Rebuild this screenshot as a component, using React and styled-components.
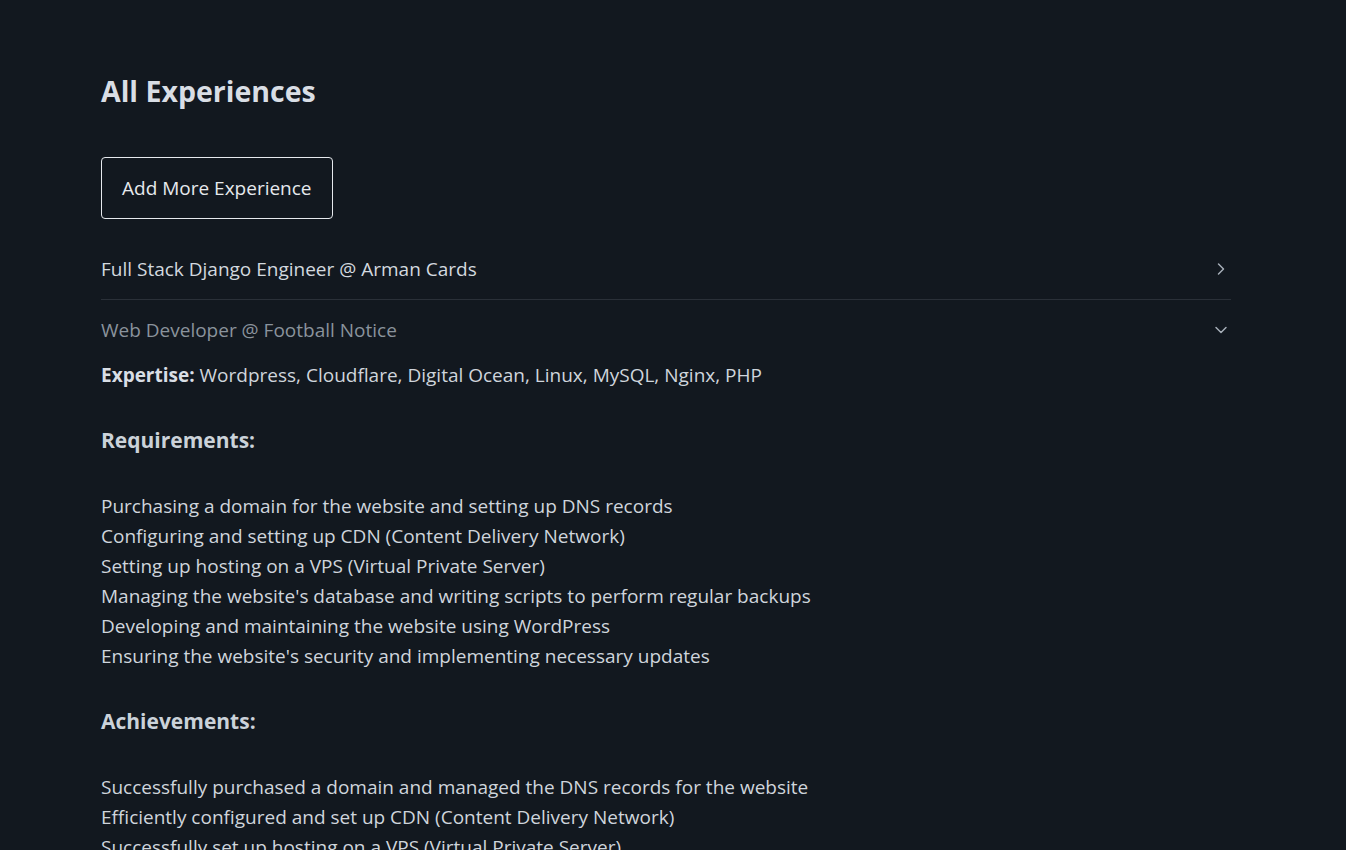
import React, { useState } from "react";
import styled, { createGlobalStyle } from "styled-components";
import { ChevronRight, ChevronDown } from "lucide-react";

const GlobalStyle = createGlobalStyle`
  html, body {
    margin: 0;
    padding: 0;
    background: #12181f;
  }
  body {
    font-family: "Open Sans", "Noto Sans", sans-serif;
    color: #cfd5dc;
  }
`;

const Page = styled.div`
  min-height: 100vh;
  background: #12181f;
  padding: 70px 0 0 101px;
  box-sizing: border-box;
`;

const Container = styled.div`
  width: 1130px;
`;

const Title = styled.h1`
  margin: 0 0 45px;
  font-size: 28.5px;
  font-weight: 700;
  line-height: 42px;
  color: #d9dee5;
`;

const AddButton = styled.button`
  display: block;
  height: 62px;
  padding: 0 20px;
  background: transparent;
  border: 1px solid #e6e9ed;
  border-radius: 4px;
  font-family: inherit;
  font-size: 19px;
  color: #e6e9ed;
  cursor: pointer;
  margin-bottom: 20px;
`;

const Item = styled.div`
  border-bottom: ${(p) => (p.$open ? "none" : "1px solid #2a3038")};
`;

const Header = styled.button`
  display: flex;
  align-items: center;
  justify-content: space-between;
  width: 100%;
  height: 60px;
  padding: 0;
  background: none;
  border: none;
  font-family: inherit;
  font-size: 19px;
  line-height: 30px;
  color: ${(p) => (p.$open ? "#8a939c" : "#d3d9df")};
  cursor: pointer;
  text-align: left;

  svg {
    color: #a7afb8;
    flex-shrink: 0;
  }
`;

const Body = styled.div`
  font-size: 19px;
  line-height: 30px;
  color: #cfd5dc;
`;

const Line = styled.div``;

const Label = styled.strong`
  font-weight: 700;
  color: #d9dee5;
`;

const SectionTitle = styled.h3`
  margin: 33px 0 34px;
  font-size: 21px;
  line-height: 34px;
  font-weight: 700;
  color: #cbd2d9;
`;

const experiences = [
  {
    title: "Full Stack Django Engineer @ Arman Cards",
  },
  {
    title: "Web Developer @ Football Notice",
    expertise: "Wordpress, Cloudflare, Digital Ocean, Linux, MySQL, Nginx, PHP",
    requirements: [
      "Purchasing a domain for the website and setting up DNS records",
      "Configuring and setting up CDN (Content Delivery Network)",
      "Setting up hosting on a VPS (Virtual Private Server)",
      "Managing the website's database and writing scripts to perform regular backups",
      "Developing and maintaining the website using WordPress",
      "Ensuring the website's security and implementing necessary updates",
    ],
    achievements: [
      "Successfully purchased a domain and managed the DNS records for the website",
      "Efficiently configured and set up CDN (Content Delivery Network)",
      "Successfully set up hosting on a VPS (Virtual Private Server)",
      "Managed the website's database and wrote scripts for regular backups",
    ],
  },
];

function Experience({ exp, open, onToggle }) {
  return (
    <Item $open={open}>
      <Header $open={open} onClick={onToggle}>
        <span>{exp.title}</span>
        {open ? (
          <ChevronDown size={20} strokeWidth={1.75} />
        ) : (
          <ChevronRight size={20} strokeWidth={1.75} />
        )}
      </Header>
      {open && exp.expertise && (
        <Body>
          <Line>
            <Label>Expertise:</Label> {exp.expertise}
          </Line>
          <SectionTitle>Requirements:</SectionTitle>
          {exp.requirements.map((r) => (
            <Line key={r}>{r}</Line>
          ))}
          <SectionTitle>Achievements:</SectionTitle>
          {exp.achievements.map((r) => (
            <Line key={r}>{r}</Line>
          ))}
        </Body>
      )}
    </Item>
  );
}

export default function App() {
  const [openIndex, setOpenIndex] = useState(1);
  return (
    <>
      <GlobalStyle />
      <Page>
        <Container>
          <Title>All Experiences</Title>
          <AddButton>Add More Experience</AddButton>
          {experiences.map((exp, i) => (
            <Experience
              key={exp.title}
              exp={exp}
              open={openIndex === i}
              onToggle={() => setOpenIndex(openIndex === i ? -1 : i)}
            />
          ))}
        </Container>
      </Page>
    </>
  );
}
